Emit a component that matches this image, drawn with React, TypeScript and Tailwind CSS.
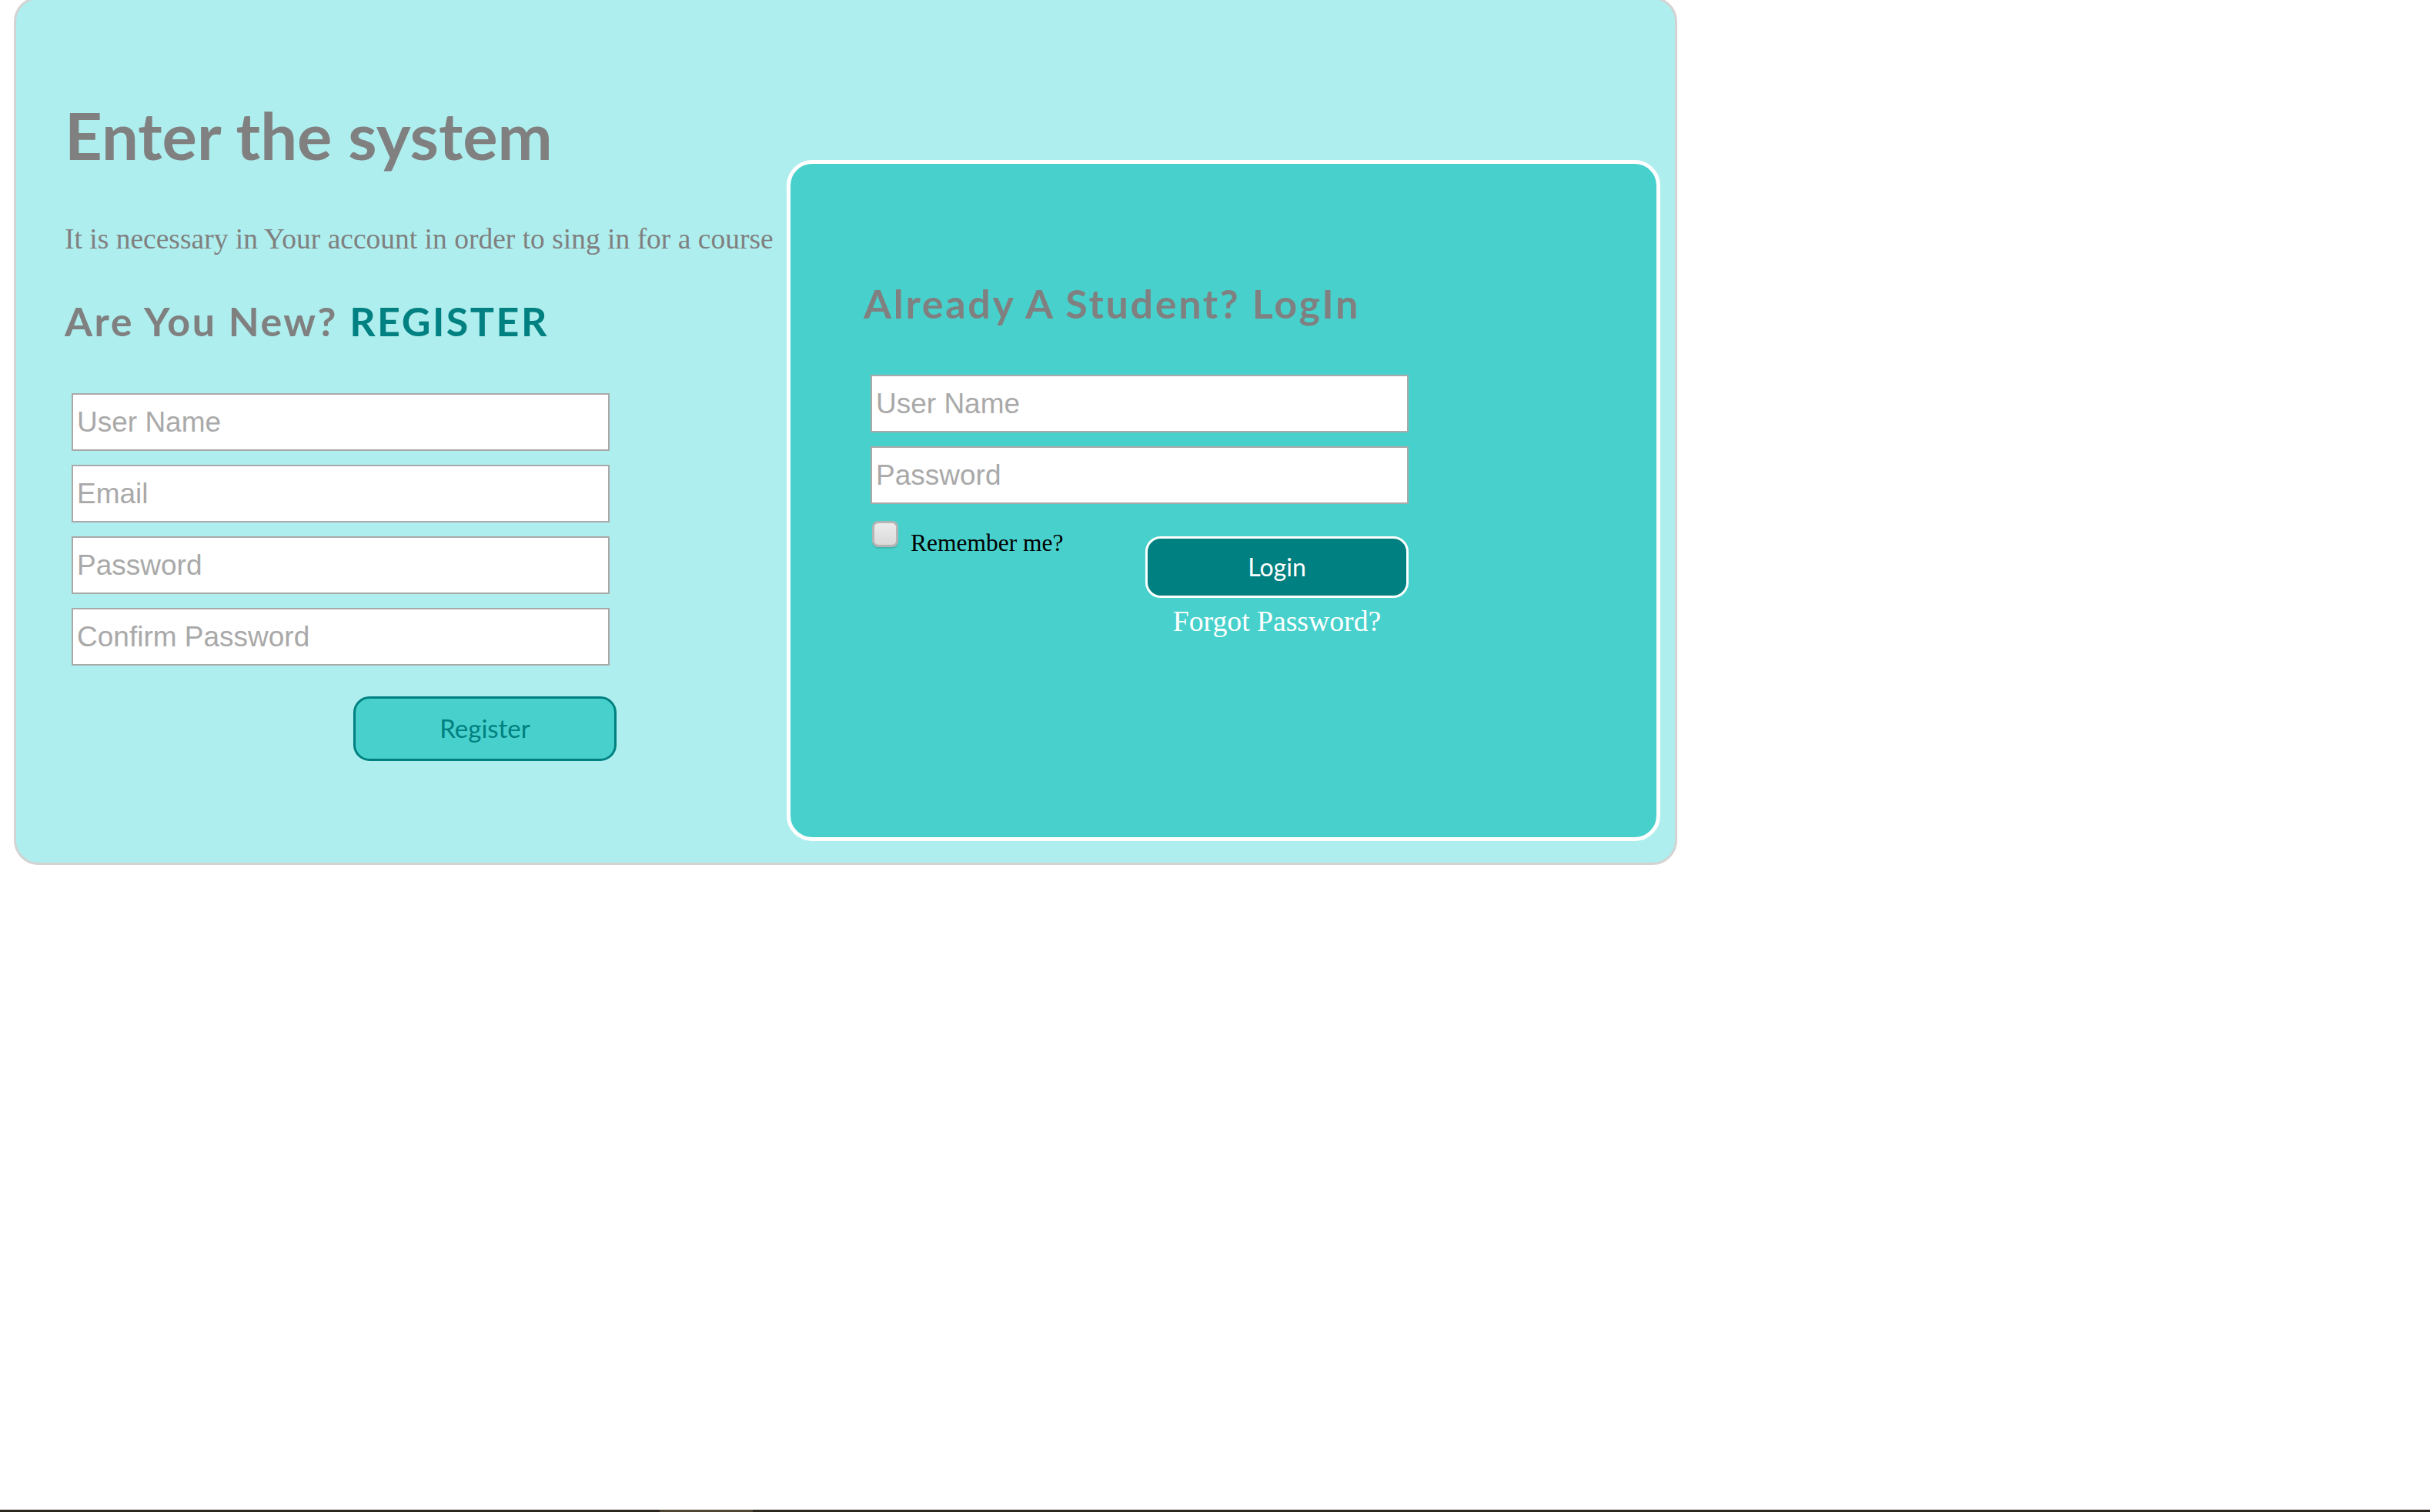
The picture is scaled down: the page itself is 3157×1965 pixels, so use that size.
import { useState } from "react"

const comic = "[font-family:'Comic_Sans_MS',Lato,sans-serif]"
const serif = "[font-family:'Liberation_Serif','Times_New_Roman',serif]"

function Field({ placeholder, type = "text" }: { placeholder: string; type?: string }) {
  return (
    <input
      type={type}
      placeholder={placeholder}
      className="block h-[75px] w-[699px] border-2 border-[#a9a9a9] bg-white pl-[5px] text-[37px] text-[#555] outline-none [font-family:'Liberation_Sans',Arial,sans-serif] placeholder:text-[#a9a9a9]"
    />
  )
}

export default function App() {
  const [remember, setRemember] = useState(false)

  return (
    <div className="flex h-screen flex-col justify-between bg-white">
      <div className="-mt-[4px] ml-[18px] flex w-[2161px] rounded-[32px] border-[3px] border-[#d3d3d3] bg-[#afeeee]">
        {/* register side */}
        <div className="w-[1001px] pl-[63px] pt-[134px]">
          <h1 className={`${comic} text-[85px] font-bold leading-[85px] text-[#808080]`}>Enter the system</h1>
          <p className={`${serif} mt-[74px] text-[37.5px] leading-[37px] text-[#808080]`}>
            It is necessary in Your account in order to sing in for a course
          </p>
          <h2 className={`${comic} mt-[62px] text-[52px] font-bold leading-[52px] tracking-[2.5px] text-[#808080]`}>
            Are You New? <span className="text-[#008080]">REGISTER</span>
          </h2>

          <form className="ml-[9px] mt-[68px] flex flex-col gap-[18px]" onSubmit={(e) => e.preventDefault()}>
            <Field placeholder="User Name" />
            <Field placeholder="Email" type="email" />
            <Field placeholder="Password" type="password" />
            <Field placeholder="Confirm Password" type="password" />
          </form>

          <button
            className={`${comic} ml-[375px] mt-[40px] h-[84px] w-[342px] rounded-[21px] border-[3px] border-[#008080] bg-[#48d1cc] text-[33px] text-[#008080]`}
          >
            Register
          </button>
        </div>

        {/* login side */}
        <div className="mb-[28px] mr-[19px] mt-[209px] h-[885px] w-[1135px] rounded-[33px] border-[5px] border-white bg-[#48d1cc] pl-[95px] pt-[155px]">
          <h2 className={`${comic} text-[52px] font-bold leading-[52px] tracking-[2.7px] text-[#808080]`}>
            Already A Student? LogIn
          </h2>

          <div className="ml-[9px] mt-[67px] flex flex-col gap-[18px]">
            <Field placeholder="User Name" />
            <Field placeholder="Password" type="password" />
          </div>

          <div className="ml-[9px] flex w-[699px] items-start justify-between">
            <label className="flex cursor-pointer items-start">
              <span
                onClick={() => setRemember(!remember)}
                className="ml-[2px] mt-[22px] flex h-[34px] w-[34px] items-center justify-center rounded-[8px] border-[3px] border-[#b4b4b4] bg-gradient-to-b from-[#ececec] to-[#dadada] shadow-[0_2px_1px_rgba(0,0,0,0.12)]"
              >
                {remember && <span className="text-[22px] leading-none text-[#333]">✓</span>}
              </span>
              <span className={`${serif} ml-[16px] mt-[35px] text-[31.5px] leading-[32px] text-black`}>Remember me?</span>
            </label>

            <div className="mt-[42px] flex w-[342px] flex-col items-center">
              <button
                className={`${comic} h-[80px] w-[342px] rounded-[20px] border-[3px] border-white bg-[#008080] text-[32px] text-white`}
              >
                Login
              </button>
              <a href="#" className={`${serif} mt-[12px] text-[37.7px] leading-[37px] text-white`}>
                Forgot Password?
              </a>
            </div>
          </div>
        </div>
      </div>

      <div className="h-[3px] w-full bg-[#2b261e]">
        <div className="ml-[857px] h-full w-[121px] bg-[#4f4535]" />
      </div>
    </div>
  )
}
